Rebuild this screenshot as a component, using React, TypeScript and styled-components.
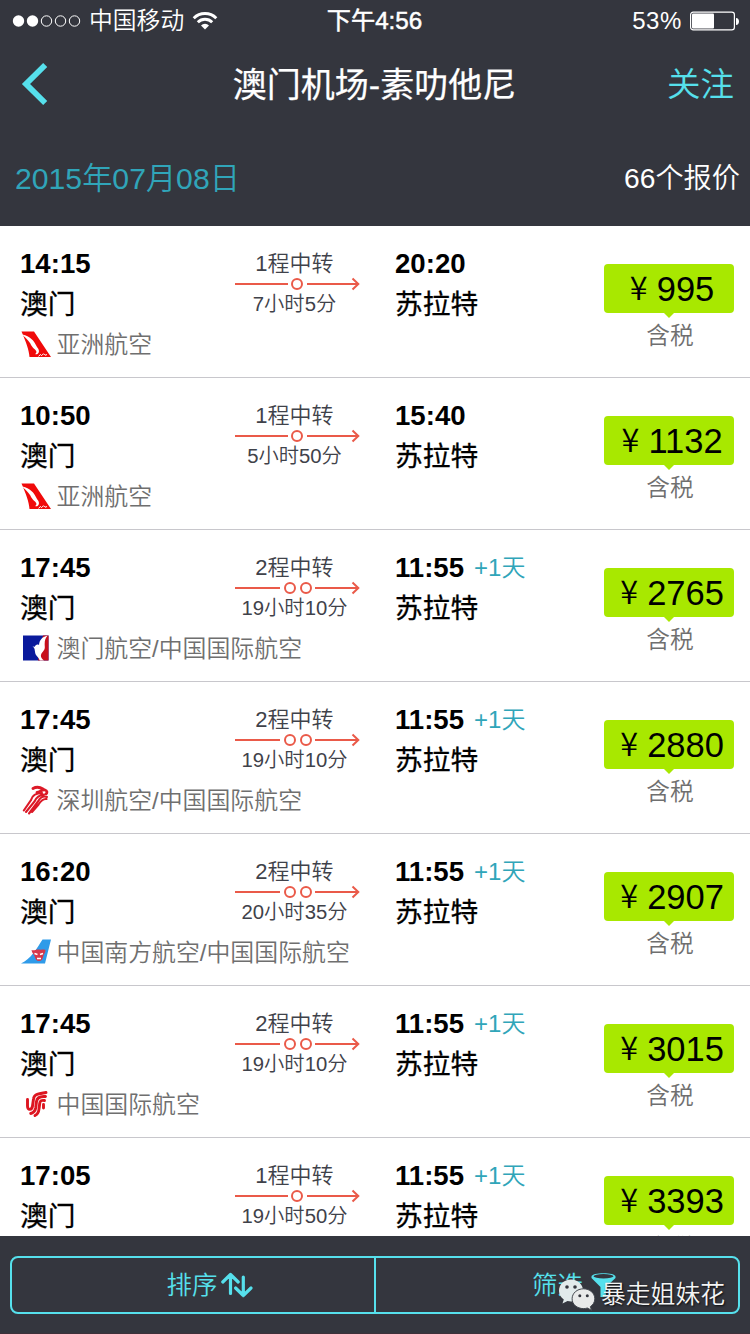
import React from "react";
import styled, { createGlobalStyle } from "styled-components";

const dark = "#34363e";
const cyan = "#56e0ec";
const teal = "#30a5b9";
const red = "#ea5a49";
const sans = `"Liberation Sans", "Noto Sans CJK SC", sans-serif`;

const Global = createGlobalStyle`
  * { box-sizing: border-box; }
  body { margin: 0; background: ${dark}; font-family: ${sans}; font-weight: 350; }
`;

const Screen = styled.div`
  position: relative;
  width: 750px;
  height: 1334px;
  display: flex;
  flex-direction: column;
  overflow: hidden;
  background: ${dark};
`;

const StatusBar = styled.header`
  height: 40px;
  flex: none;
  display: grid;
  grid-template-columns: 1fr auto 1fr;
  align-items: center;
  padding: 0 11px 0 12px;
  color: #fff;
  font-size: 24px;
  line-height: 42px;
`;

const StatusSide = styled.div<{ $end?: boolean }>`
  display: flex;
  align-items: center;
  justify-content: ${(p) => (p.$end ? "flex-end" : "flex-start")};
  gap: 8px;
`;

const Clock = styled.div`
  padding-right: 2px;
  font-size: 24.2px;
  font-weight: 400;
  -webkit-text-stroke: 0.5px currentColor;
`;

const Carrier = styled.span`
  margin-left: -1px;
  font-size: 23.8px;
`;

const Percent = styled.span`
  font-size: 24px;
  letter-spacing: 0.6px;
`;

const NavBar = styled.nav`
  height: 88px;
  flex: none;
  display: grid;
  grid-template-columns: 108px 1fr 113px;
  align-items: center;
  padding: 0 16px 0 20px;

  svg {
    margin-bottom: 2px;
  }
`;

const Title = styled.h1`
  margin: 0;
  text-align: center;
  color: #fff;
  font-size: 34px;
  font-weight: 400;
  line-height: 90px;
  -webkit-text-stroke: 0.25px currentColor;
`;

const Follow = styled.span`
  color: ${cyan};
  font-size: 33.5px;
  line-height: 90px;
  text-align: right;
`;

const Summary = styled.section`
  height: 98px;
  flex: none;
  display: flex;
  justify-content: space-between;
  align-items: center;
  padding: 0 10px 0 15px;
`;

const DateLabel = styled.span`
  padding-bottom: 2px;
  color: ${teal};
  font-size: 30.2px;
`;

const QuoteCount = styled.span`
  padding-bottom: 4px;
  color: #fff;
  font-size: 28.2px;
`;

const List = styled.main`
  height: 1010px;
  flex: none;
  overflow: hidden;
  background: #fff;
`;

const Row = styled.article`
  height: 152px;
  display: grid;
  grid-template-columns: 215px 125px 244px 130px;
  padding: 18px 0 0 20px;
  border-bottom: 1px solid #c8c7cc;
`;

const Place = styled.div<{ $indent?: boolean }>`
  padding-left: ${(p) => (p.$indent ? 35 : 0)}px;
  white-space: nowrap;
`;

const Time = styled.div`
  display: flex;
  gap: 10px;
  color: #000;
  font-size: 27.6px;
  font-weight: 700;
  line-height: 40px;
`;

const NextDay = styled.span`
  color: ${teal};
  font-size: 24px;
  font-weight: 350;
`;

const City = styled.div`
  color: #000;
  font-size: 27.7px;
  font-weight: 400;
  line-height: 40px;
  padding-top: 1px;
  height: 42px;
  -webkit-text-stroke: 0.3px currentColor;
`;

const Airline = styled.div`
  display: flex;
  align-items: center;
  gap: 4.5px;
  color: #6f6f6f;
  font-size: 23.9px;
  line-height: 38px;

  svg {
    flex: none;
    margin-bottom: 2px;
  }
`;

const Route = styled.div`
  display: flex;
  flex-direction: column;
  padding-top: 6px;
`;

const RouteText = styled.div<{ $size: number }>`
  padding-right: 6px;
  color: #3f424a;
  font-size: ${(p) => p.$size}px;
  line-height: 28px;
  text-align: center;
  white-space: nowrap;
`;

const RouteLine = styled.svg`
  display: block;
  overflow: visible;
`;

const Fare = styled.div`
  display: flex;
  flex-direction: column;
  align-items: center;
  padding-top: 20px;
`;

const Price = styled.div`
  position: relative;
  width: 130px;
  height: 49px;
  display: flex;
  justify-content: center;
  border-radius: 4px;
  background: #a8e800;
  color: #000;
  font-size: 34.5px;
  line-height: 51px;
  padding-right: 1px;
  &::after {
    content: "";
    position: absolute;
    left: 60px;
    top: 49px;
    border: 5px solid transparent;
    border-top-color: #a8e800;
    border-bottom: 0;
  }
`;

const Yen = styled.span`
  width: 34px;
  padding-right: 2px;
  font-family: "Noto Sans CJK SC", sans-serif;
  font-size: 32.5px;
  line-height: 44px;
  text-align: center;
`;

const Tax = styled.div`
  padding-left: 2px;
  color: #6f6f6f;
  font-size: 23.7px;
  line-height: 46px;
`;

const Footer = styled.footer`
  flex: 1;
  padding: 20px 10px 0;
  border-bottom: 1px solid #3d3039;
`;

const Segments = styled.div`
  height: 58px;
  display: grid;
  grid-template-columns: 364px 1fr;
  border: 2px solid ${cyan};
  border-radius: 8px;
`;

const Segment = styled.div<{ $divided?: boolean }>`
  display: flex;
  align-items: center;
  justify-content: center;
  gap: ${(p) => (p.$divided ? 3 : 8)}px;
  padding-left: ${(p) => (p.$divided ? 33 : 34)}px;
  border-right: ${(p) => (p.$divided ? `2px solid ${cyan}` : "0")};
  color: ${cyan};
  font-size: 25.5px;
  line-height: 54px;

  svg {
    margin-bottom: 1px;
  }
`;

const Watermark = styled.div`
  position: absolute;
  left: 558px;
  top: 1275px;
  display: flex;
  align-items: center;
  gap: 5px;
  height: 40px;
  color: #f4f4f4;
  font-size: 24.8px;
  line-height: 40px;
  text-shadow: 1px 1px 2px rgba(0, 0, 0, 0.8);
`;

const SignalDots = () => (
  <svg width="70" height="14" viewBox="0 0 70 14">
    {[0, 1, 2, 3, 4].map((i) => (
      <circle
        key={i}
        cx={6.5 + i * 14}
        cy="7"
        r={i < 2 ? 5.7 : 5.2}
        fill={i < 2 ? "#fff" : "none"}
        stroke={i < 2 ? "none" : "#fff"}
      />
    ))}
  </svg>
);

const Wifi = () => (
  <svg width="26" height="20" viewBox="0 0 26 20" fill="none" stroke="#fff" strokeWidth="2.9">
    <path d="M1.7 7.2a16 16 0 0 1 22.600 0" />
    <path d="M5.800 11.300a10.200 10.200 0 0 1 14.400 0" />
    <path d="M13 18.600l-4-4.100a5.700 5.700 0 0 1 8 0z" fill="#fff" stroke="none" />
  </svg>
);

const Battery = () => (
  <svg width="49" height="20" viewBox="0 0 49 20">
    <rect x="0.6" y="1.1" width="43.8" height="17.8" rx="2.6" fill="none" stroke="#fff" strokeWidth="1.2" />
    <rect x="2" y="2.5" width="22" height="15" rx="1" fill="#fff" />
    <path d="M46 7c4 0 4 7 0 7z" fill="#fff" />
  </svg>
);

const BackIcon = () => (
  <svg width="30" height="44" viewBox="0 0 30 44" fill="none" stroke={cyan} strokeWidth="5.8">
    <path d="M25.200 3L6 22l19.200 19" />
  </svg>
);

const SortIcon = () => (
  <svg width="32" height="26" viewBox="0 0 32 26" fill="none" stroke={cyan} strokeWidth="3.2" strokeLinecap="round" strokeLinejoin="round">
    <path d="M9.500 21.500V2.500M1.800 10l7.700-7.500L17.200 10M22.300 5V23.500M14.600 16l7.700 7.500L30 16" />
  </svg>
);

const FilterIcon = () => (
  <svg width="25" height="26" viewBox="0 0 25 26">
    <path d="M0.500 4.500C0.500 0 24.500 0 24.500 4.500V6L15 15V25H9.500V15L0.500 6Z" fill={cyan} />
    <ellipse cx="12.500" cy="4.300" rx="10" ry="2.200" fill={dark} />
  </svg>
);

const WechatIcon = () => (
  <svg width="38" height="34" viewBox="0 0 38 34">
    <path d="M13 1.500C5.800 1.500 1 6.500 1 13c0 3.600 1.900 6.500 4.800 8.500L4.500 25.500l5-2.500c1.100.3 2.300.5 3.500.5C20 23.500 25 18.500 25 12.500S20 1.500 13 1.500z" fill="#e2eaeb" />
    <path d="M25.500 10.800c-6.400 0-11.400 4.400-11.400 10s5 9.800 11.400 9.800c1.400 0 2.700-.2 3.900-.6l4 2.200-1-3.600c2.700-1.800 4.400-4.500 4.400-7.800 0-5.600-4.900-10-11.300-10z" fill="#e9eaea" stroke="#44484f" strokeWidth="1" />
    <g fill={dark}>
      <circle cx="9" cy="9" r="1.800" />
      <circle cx="17" cy="9" r="1.800" />
      <circle cx="21.800" cy="17.800" r="1.500" />
      <circle cx="29.300" cy="17.800" r="1.500" />
    </g>
  </svg>
);

type Logo = "asia" | "macau" | "shenzhen" | "southern" | "airchina";

const AirlineLogo = ({ kind }: { kind: Logo }) => (
  <svg width="32" height="30" viewBox="0 0 32 30">
    {kind === "asia" && (
      <>
        <path d="M1.500 2.500H14L31 28H9.500C9 21 6 13 1.500 2.500z" fill="#f00a0a" />
        <path d="M2.500 5.500C10 7 14 11.500 17 18c2 2.500 3 5 .5 7-1 .5-2 .3-2.300 0 1.800-1.200 1.500-3-.2-4.500-3.500-3-4-5-5-6.500C8 11 6 9 3.500 7z" fill="#fff" />
        <path d="M18.500 27.300l2-1.800 1 1.200 2-2 1.500 1.500 2-.6" fill="none" stroke="#fff" strokeWidth="1" />
      </>
    )}
    {kind === "macau" && (
      <>
        <path d="M3 2.500H28.500V27.500H3z" fill="#0a1a9c" />
        <path d="M23 2.500h5.500v25H18z" fill="#c8101c" />
        <path d="M27.500 2.500C22 4 19.500 7 19 12c-2-1.200-3.500 0-4.200 1.700l-2.300-.2c3.500 1.500 1.300 6.500 4.300 9.500 1.300 1.300 2.200 2.700 3 4.500h4.200c-4.500-3.500-3.500-6.500-.6-9.500 2.300-2.500 1.100-4.500 1.300-7.500 0-3 .8-5.500 2.800-8z" fill="#fff" />
      </>
    )}
    {kind === "shenzhen" && (
      <g fill="none" stroke="#dc1927" strokeLinecap="round">
        <path d="M13 3.500c3.500-2 6-2 10 .5M17 7.500c3-.5 5-3 8-2.500 2 .5 2.500 2.500 1 4" strokeWidth="2.800" />
        <path d="M22 8c-5 0-9.500 1.500-11 7L3.800 25.500M24 9.500c-5 .5-7.500 2.500-9.500 7L6 27M27 12c-4-1.500-7 1-9 4.500L9 28.500M26.500 14c-3.500-.5-5.500 1.500-8 5.500L12 27" strokeWidth="2.100" />
      </g>
    )}
    {kind === "southern" && (
      <>
        <path d="M22.500 2.500H31L25 26.500H1C11 22 17 11 22.500 2.500z" fill="#2f9be9" />
        <path d="M11.500 13c3 .8 4.500-1 7.500-.5s4-.5 6.500.5c0 3-1.800 4-2.200 6-.5 3-1.800 5-4.300 5s-3.800-2-4.300-4.500c-.5-2-2.700-3-3.200-6.500z" fill="#d6384b" />
        <path d="M14.500 16.500l3 1M20 17.500l3-1M17 21.500h4" stroke="#fff" strokeWidth="1.500" />
      </>
    )}
    {kind === "airchina" && (
      <g fill="none" stroke="#dd1520" strokeLinecap="round" strokeWidth="2.900">
        <path d="M7.500 10.500v6.500c0 5 4.500 4 5 0l1-7C14 5 18 5 26 3.500" />
        <path d="M25.500 7.500c-6-.5-8.500 1-9 5l-.8 6.500c-.7 4-3 5-5 5.500" />
        <path d="M24.500 11.500c-3.500-.5-4.500.5-4.800 3l-.7 5.500c-.3 3.500-2 5.500-4 6.500M23.500 15.500v3.500" />
      </g>
    )}
  </svg>
);

const Stops = ({ count }: { count: number }) => {
  const gapStart = count === 1 ? 53 : 45;
  const gapEnd = count === 1 ? 72 : 80;
  const centers = count === 1 ? [62] : [55, 71];
  return (
    <RouteLine width="125" height="12" viewBox="0 0 125 12" fill="none" stroke={red} strokeWidth="2">
      <path d={`M0 6H${gapStart}M${gapEnd} 6H123M117.500 0.500L123.300 6L117.500 11.500`} />
      {centers.map((x) => (
        <circle key={x} cx={x} cy="6" r="5" />
      ))}
    </RouteLine>
  );
};

interface Flight {
  depart: string;
  arrive: string;
  nextDay?: boolean;
  stops: number;
  duration: string;
  airline?: string;
  logo?: Logo;
  price: string;
}

const flights: Flight[] = [
  { depart: "14:15", arrive: "20:20", stops: 1, duration: "7小时5分", airline: "亚洲航空", logo: "asia", price: "995" },
  { depart: "10:50", arrive: "15:40", stops: 1, duration: "5小时50分", airline: "亚洲航空", logo: "asia", price: "1132" },
  { depart: "17:45", arrive: "11:55", nextDay: true, stops: 2, duration: "19小时10分", airline: "澳门航空/中国国际航空", logo: "macau", price: "2765" },
  { depart: "17:45", arrive: "11:55", nextDay: true, stops: 2, duration: "19小时10分", airline: "深圳航空/中国国际航空", logo: "shenzhen", price: "2880" },
  { depart: "16:20", arrive: "11:55", nextDay: true, stops: 2, duration: "20小时35分", airline: "中国南方航空/中国国际航空", logo: "southern", price: "2907" },
  { depart: "17:45", arrive: "11:55", nextDay: true, stops: 2, duration: "19小时10分", airline: "中国国际航空", logo: "airchina", price: "3015" },
  { depart: "17:05", arrive: "11:55", nextDay: true, stops: 1, duration: "19小时50分", price: "3393" },
];

const FlightRow = ({ flight }: { flight: Flight }) => (
  <Row>
    <Place>
      <Time>{flight.depart}</Time>
      <City>澳门</City>
      {flight.logo && (
        <Airline>
          <AirlineLogo kind={flight.logo} />
          {flight.airline}
        </Airline>
      )}
    </Place>
    <Route>
      <RouteText $size={22}>{flight.stops}程中转</RouteText>
      <Stops count={flight.stops} />
      <RouteText $size={20.3}>{flight.duration}</RouteText>
    </Route>
    <Place $indent>
      <Time>
        {flight.arrive}
        {flight.nextDay && <NextDay>+1天</NextDay>}
      </Time>
      <City>苏拉特</City>
    </Place>
    <Fare>
      <Price>
        <Yen>¥</Yen>
        {flight.price}
      </Price>
      <Tax>含税</Tax>
    </Fare>
  </Row>
);

export default function App() {
  return (
    <Screen>
      <Global />
      <StatusBar>
        <StatusSide>
          <SignalDots />
          <Carrier>中国移动</Carrier>
          <Wifi />
        </StatusSide>
        <Clock>下午4:56</Clock>
        <StatusSide $end>
          <Percent>53%</Percent>
          <Battery />
        </StatusSide>
      </StatusBar>
      <NavBar>
        <BackIcon />
        <Title>澳门机场-素叻他尼</Title>
        <Follow>关注</Follow>
      </NavBar>
      <Summary>
        <DateLabel>2015年07月08日</DateLabel>
        <QuoteCount>66个报价</QuoteCount>
      </Summary>
      <List>
        {flights.map((flight, i) => (
          <FlightRow key={i} flight={flight} />
        ))}
      </List>
      <Footer>
        <Segments>
          <Segment $divided>
            排序
            <SortIcon />
          </Segment>
          <Segment>
            筛选
            <FilterIcon />
          </Segment>
        </Segments>
      </Footer>
      <Watermark>
        <WechatIcon />
        暴走姐妹花
      </Watermark>
    </Screen>
  );
}
